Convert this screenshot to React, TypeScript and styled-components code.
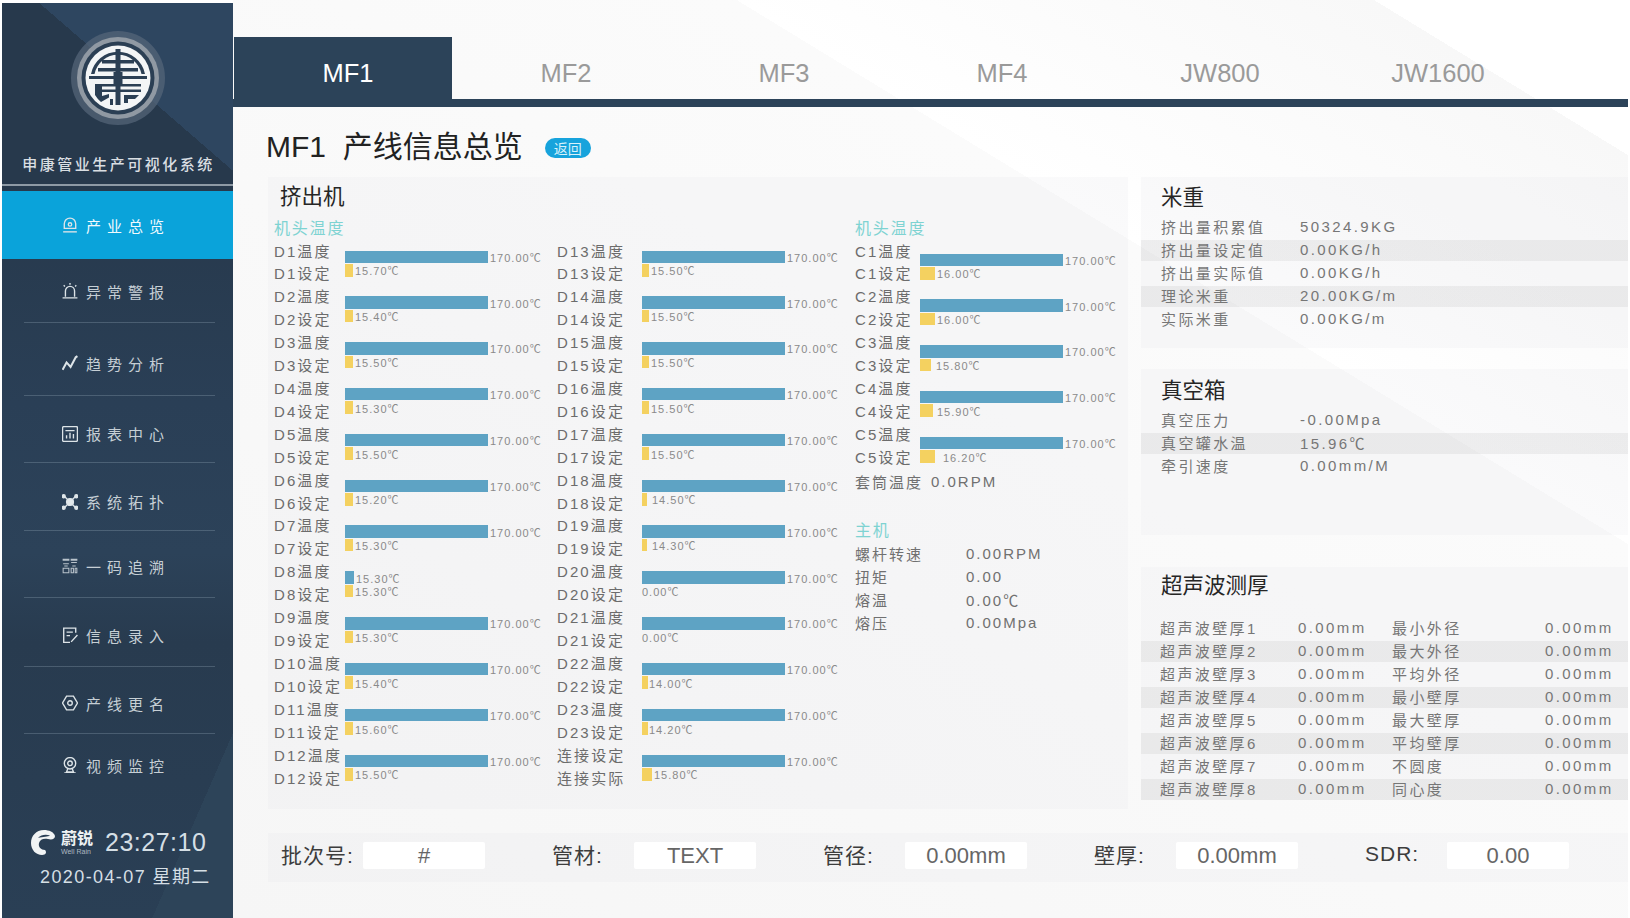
import styled, { createGlobalStyle } from 'styled-components';

const GlobalStyle = createGlobalStyle`
	html, body {
		margin: 0;
		padding: 0;
		background: #fff;
	}
	* {
		box-sizing: border-box;
	}
`;

const Page = styled.div`
	width: 1630px;
	height: 918px;
	display: flex;
	overflow: hidden;
	font-family: "Liberation Sans", "Noto Sans CJK SC", sans-serif;
	background: #fff;
`;

const Sidebar = styled.aside`
	flex: 0 0 231px;
	height: 915px;
	margin: 3px 0 0 2px;
	display: flex;
	flex-direction: column;
	color: #d3dade;
	background:
		linear-gradient(40.9deg, transparent 716px, #2e4660 716px),
		linear-gradient(113.6deg, transparent 504px, #2d4459 504px),
		linear-gradient(180deg, #27394c 0, #27394c 190px, #2a3f56 400px, #2c4259 550px, #283b4f 640px, #2a3f55 915px);
`;

const LogoWrap = styled.div`
	height: 122px;
	padding-top: 28px;
	display: flex;
	justify-content: center;
`;

const SystemName = styled.div`
	margin-top: 30px;
	height: 20px;
	line-height: 20px;
	text-align: center;
	font-size: 15px;
	font-weight: 500;
	letter-spacing: 2.5px;
	padding-left: 2px;
	color: #d9dee2;
	white-space: nowrap;
`;

const SideRule = styled.div`
	margin-top: 9px;
	height: 2px;
	background: #8e9aa5;
	margin-bottom: 5px;
`;

const NavItem = styled.div<{ $h: number; $pad: number; $active?: boolean; $rule?: boolean }>`
	height: ${p => p.$h}px;
	padding: ${p => p.$pad}px 0 0 60px;
	display: flex;
	align-items: center;
	gap: 8px;
	font-size: 15px;
	letter-spacing: 6px;
	color: ${p => (p.$active ? '#f2fafd' : '#c6cfd5')};
	background: ${p =>
		p.$active
			? '#0aa3da'
			: p.$rule
				? 'linear-gradient(rgba(160,180,195,.28), rgba(160,180,195,.28)) no-repeat 22px bottom / 191px 1px'
				: 'none'};
	white-space: nowrap;
`;

const SideFooter = styled.div`
	margin-top: 32px;
	padding-left: 28px;
	display: flex;
	flex-direction: column;
`;

const BrandRow = styled.div`
	display: flex;
	align-items: center;
`;

const BrandText = styled.div`
	margin-left: 4px;
	width: 35px;
	display: flex;
	flex-direction: column;
	color: #eef2f4;
`;

const BrandName = styled.span`
	font-size: 16px;
	line-height: 17px;
	font-weight: 700;
	white-space: nowrap;
`;

const BrandSub = styled.span`
	font-size: 7px;
	line-height: 9px;
	color: #aeb9c1;
	white-space: nowrap;
`;

const Clock = styled.div`
	margin-left: 9px;
	font-size: 25px;
	letter-spacing: 0.5px;
	color: #d5dfe5;
`;

const DateLine = styled.div`
	margin: 9px 0 0 10px;
	font-size: 18px;
	line-height: 22px;
	letter-spacing: 1.4px;
	color: #d5dfe5;
	white-space: nowrap;
`;

const Main = styled.main`
	flex: 1;
	min-width: 0;
	margin-right: 2px;
	padding-top: 37px;
	background: linear-gradient(31.4deg, #f6f6f6 0, #fbfbfb 1046px, #fff 1046px, #f8f8f8 1378px, #fff 1378px, #fff);
`;

const Tabs = styled.nav`
	display: flex;
	height: 70px;
	padding-bottom: 8px;
	background: linear-gradient(#2c4359, #2c4359) no-repeat left bottom / 100% 8px;
`;

const Tab = styled.div<{ $active?: boolean }>`
	flex: 0 0 218px;
	margin-left: ${p => (p.$active ? '1px' : '0')};
	padding: 10px 0 0 10px;
	display: flex;
	align-items: center;
	justify-content: center;
	font-size: 25.5px;
	color: ${p => (p.$active ? '#fff' : '#9a9a9a')};
	background: ${p => (p.$active ? '#2c4359' : 'transparent')};
`;

const Content = styled.div`
	padding: 17px 0 0 35px;
`;

const TitleRow = styled.div`
	height: 40px;
	margin: 0 0 13px -2px;
	display: flex;
	align-items: center;
`;

const PageTitle = styled.h1`
	margin: 0;
	font-size: 30px;
	font-weight: 400;
	color: #222;
	white-space: pre;
`;

const BackBadge = styled.span`
	margin: 8px 0 0 22px;
	width: 46px;
	height: 20px;
	border-radius: 10px;
	display: flex;
	align-items: center;
	justify-content: center;
	font-size: 14px;
	color: #d8f2fb;
	background: #17a3dc;
`;

const Columns = styled.div`
	display: flex;
	gap: 13px;
	align-items: flex-start;
`;

const Panel = styled.section`
	background: rgba(226, 227, 232, 0.17);
`;

const ExtruderPanel = styled(Panel)`
	flex: 0 0 860px;
	height: 632px;
	padding: 7px 0 0 6px;
`;

const PanelTitle = styled.h2<{ $left?: number }>`
	margin: 0 0 0 ${p => p.$left ?? 0}px;
	height: 26px;
	line-height: 26px;
	font-size: 21.5px;
	font-weight: 400;
	color: #262626;
`;

const ExtruderGrid = styled.div`
	margin-top: 9px;
	display: grid;
	grid-template-columns: 283px 298px 1fr;
`;

const SubHead = styled.div<{ $top?: number }>`
	margin-top: ${p => p.$top ?? 0}px;
	height: 21.5px;
	line-height: 20px;
	font-size: 16px;
	letter-spacing: 1.8px;
	color: #7ed3d2;
`;

const Pair = styled.div<{ $label: number }>`
	height: 45.84px;
	display: grid;
	grid-template-columns: ${p => p.$label}px 1fr;
`;

const PairLabels = styled.div`
	display: flex;
	flex-direction: column;
`;

const DataLabel = styled.span`
	height: 22.92px;
	line-height: 22.92px;
	font-size: 15px;
	letter-spacing: 2.1px;
	color: #6c6c6c;
	white-space: nowrap;
`;

const PairBars = styled.div<{ $top: number }>`
	padding-top: ${p => p.$top}px;
	display: flex;
	flex-direction: column;
	gap: 1px;
`;

const BarLine = styled.div`
	height: 12.5px;
	display: flex;
	align-items: center;
`;

const Bar = styled.div<{ $width: number; $kind: 'actual' | 'set' }>`
	flex: 0 0 ${p => p.$width}px;
	height: 100%;
	background: ${p => (p.$kind === 'actual' ? '#5ea3c4' : '#f4d160')};
`;

const BarValue = styled.span<{ $gap: number }>`
	margin-left: ${p => p.$gap}px;
	font-size: 11px;
	letter-spacing: 1px;
	color: #8a8a8a;
	white-space: nowrap;
`;

const InfoLine = styled.div<{ $value: number }>`
	height: 23px;
	display: grid;
	grid-template-columns: ${p => p.$value}px 1fr;
	align-items: center;
	font-size: 15px;
	letter-spacing: 2px;
	color: #707070;
	white-space: nowrap;
`;

const SideColumn = styled.div`
	flex: 1;
	min-width: 0;
	display: flex;
	flex-direction: column;
`;

const MetricPanel = styled(Panel)<{ $h: number; $mb: number; $pad: number }>`
	height: ${p => p.$h}px;
	margin-bottom: ${p => p.$mb}px;
	padding-top: ${p => p.$pad}px;
`;

const MetricList = styled.div<{ $top: number }>`
	margin-top: ${p => p.$top}px;
`;

const MetricRow = styled.div<{ $columns: string; $pad: number }>`
	height: 23px;
	padding: 0 0 3px ${p => p.$pad}px;
	display: grid;
	grid-template-columns: ${p => p.$columns};
	align-items: center;
	font-size: 15px;
	letter-spacing: 2.4px;
	color: #767676;
	white-space: nowrap;

	&:nth-child(even) {
		background: linear-gradient(rgba(0, 0, 0, 0.05), rgba(0, 0, 0, 0.05)) no-repeat center / 100% 21px;
	}
`;

const BottomBar = styled(Panel)`
	margin-top: 24px;
	height: 49px;
	padding: 9px 0 0 13px;
	display: grid;
	grid-template-columns: repeat(5, 271px);
	align-items: start;
`;

const Field = styled.div`
	height: 27px;
	display: flex;
	align-items: center;
`;

const FieldLabel = styled.span`
	flex: 0 0 82px;
	padding-bottom: 4px;
	font-size: 21px;
	letter-spacing: 1px;
	color: #3d3d3d;
	white-space: nowrap;
`;

const FieldValue = styled.span`
	flex: 0 0 122px;
	height: 27px;
	line-height: 27px;
	text-align: center;
	font-size: 22px;
	color: #666;
	background: #fff;
	border-radius: 2px;
`;

const Logo = () => (
	<svg width="94" height="94" viewBox="-47 -47 94 94">
		<circle r="47" fill="#57677a" opacity=".7" />
		<circle r="41" fill="#9099a3" />
		<circle r="36.500" fill="#2b3f54" />
		<circle r="32.500" fill="#f3f5f6" />
		<path d="M-27-4A27.500 27.500 0 0 1 27-4H23.500A24 24 0 0 0-23.500-4Z" fill="#2b3f54" />
		<path d="M-29-2H29V1H-29Z" fill="#2b3f54" />
		<path d="M-2.500-29H2.500V-6H4.500V6H2.500V27H-2.500V6H-4.500V-6H-2.500Z" fill="#2b3f54" />
		<path d="M-16-18H16V-14.500H-16ZM-20-10H20V-6.500H-20Z" fill="#2b3f54" />
		<path d="M-23 6H23V8.500H-16V11.500H23V14H-16V18L-9 16V19.500L-17 24A28 28 0 0 1-23 17Z" fill="#2b3f54" />
		<path d="M6 17H21L17 21H10V25H6ZM-8 21H-5V27H-8Z" fill="#2b3f54" />
	</svg>
);

const BrandMark = () => (
	<svg width="27" height="27" viewBox="0 0 27 27">
		<path
			d="M14 1C6 1 1 7 1 14c0 7 5 12 11 12 4 0 5-3 3-5-4 0-7-3-6-7 1-4 5-5 9-4 4 1 7 0 7-3-1-4-6-6-11-6Z"
			fill="#f1f4f5"
		/>
		<path d="M8 9c3-3.500 8-4 12-2.500-2 1.500-7 1-12 2.500Z" fill="#2a3f55" />
	</svg>
);

const iconPaths: Record<string, React.ReactNode> = {
	overview: (
		<>
			<path d="M3 11V7a5 5 0 0 1 10 0v4Z" />
			<circle cx="8" cy="7.500" r="1.500" />
			<path d="M2 14h12" />
		</>
	),
	alarm: (
		<>
			<path d="M4 13V8a4 4 0 0 1 8 0v5" />
			<path d="M1.500 14h13M8 1v1.500M2.500 3l1 1M13.500 3l-1 1" />
		</>
	),
	trend: <path d="M1.500 14 5 7.500l3.500 4L13 3l1.500-1" strokeWidth="1.800" />,
	report: (
		<>
			<rect x="1.500" y="1.500" width="13" height="13" rx="1" />
			<path d="M4 5h8M5 12V9M8 12V7M11 12V8" />
		</>
	),
	topology: (
		<>
			<path d="M3 3l10 10M13 3 3 13" />
			<circle cx="8" cy="8" r="3" fill="#e2e8eb" />
			<circle cx="2.500" cy="3" r="1.300" fill="#e2e8eb" />
			<circle cx="13.500" cy="3" r="1.300" fill="#e2e8eb" />
			<circle cx="2.500" cy="13" r="1.300" fill="#e2e8eb" />
			<circle cx="13.500" cy="13" r="1.300" fill="#e2e8eb" />
		</>
	),
	code: (
		<path
			d="M2 2h5v1H2ZM9 2h5v1H9ZM2 6h5M9 5h5M3 8h3M10 8h3M2 10h5v4H2ZM9 10h2v4H9ZM12.500 10h1.500v4h-1.500Z"
			strokeWidth=".9"
			opacity=".8"
		/>
	),
	entry: (
		<>
			<path d="M13 6V2H2.500v12.500H8" />
			<path d="M5 5.500h5.500M5 8.500h3M9 14l5.500-6" />
		</>
	),
	rename: (
		<>
			<path d="M5 2h6l3.500 6L11 14H5L1.500 8Z" />
			<circle cx="8" cy="8" r="2" />
		</>
	),
	video: (
		<>
			<circle cx="8" cy="6.500" r="5" />
			<circle cx="8" cy="6.500" r="2" />
			<path d="M6 11.500 5 14h6l-1-2.500M3 15h10" />
		</>
	),
};

const NavIcon = ({ name }: { name: string }) => (
	<svg width="16" height="16" viewBox="1 1 14 14" fill="none" stroke="#dde4e8" strokeWidth="1.200" style={{ flex: '0 0 16px' }}>
		{iconPaths[name]}
	</svg>
);

const navItems = [
	{ label: '产业总览', icon: 'overview', h: 68, pad: 0, active: true },
	{ label: '异常警报', icon: 'alarm', h: 64, pad: 0, rule: true },
	{ label: '趋势分析', icon: 'trend', h: 73, pad: 7, rule: true },
	{ label: '报表中心', icon: 'report', h: 67, pad: 8, rule: true },
	{ label: '系统拓扑', icon: 'topology', h: 68, pad: 9, rule: true },
	{ label: '一码追溯', icon: 'code', h: 67, pad: 3, rule: true },
	{ label: '信息录入', icon: 'entry', h: 69, pad: 5, rule: true },
	{ label: '产线更名', icon: 'rename', h: 67, pad: 5, rule: true },
	{ label: '视频监控', icon: 'video', h: 62, pad: 0 },
];

const tabs = ['MF1', 'MF2', 'MF3', 'MF4', 'JW800', 'JW1600'];

type PairData = {
	top: string;
	bottom: string;
	actual?: string;
	actualWidth?: number;
	set: string;
	setWidth: number;
	setGap: number;
};

const column1: PairData[] = [
	['1', '15.70'], ['2', '15.40'], ['3', '15.50'], ['4', '15.30'], ['5', '15.50'], ['6', '15.20'],
	['7', '15.30'], ['8', '15.30'], ['9', '15.30'], ['10', '15.40'], ['11', '15.60'], ['12', '15.50'],
].map(([n, set]) => ({
	top: `D${n}温度`,
	bottom: `D${n}设定`,
	set,
	setWidth: 8,
	setGap: 2,
	...(n === '8' ? { actual: '15.30', actualWidth: 9 } : {}),
}));

const column2: PairData[] = [
	{ top: 'D13温度', bottom: 'D13设定', set: '15.50', setWidth: 7, setGap: 2 },
	{ top: 'D14温度', bottom: 'D14设定', set: '15.50', setWidth: 7, setGap: 2 },
	{ top: 'D15温度', bottom: 'D15设定', set: '15.50', setWidth: 7, setGap: 2 },
	{ top: 'D16温度', bottom: 'D16设定', set: '15.50', setWidth: 7, setGap: 2 },
	{ top: 'D17温度', bottom: 'D17设定', set: '15.50', setWidth: 7, setGap: 2 },
	{ top: 'D18温度', bottom: 'D18设定', set: '14.50', setWidth: 5, setGap: 5 },
	{ top: 'D19温度', bottom: 'D19设定', set: '14.30', setWidth: 5, setGap: 5 },
	{ top: 'D20温度', bottom: 'D20设定', set: '0.00', setWidth: 0, setGap: 0 },
	{ top: 'D21温度', bottom: 'D21设定', set: '0.00', setWidth: 0, setGap: 0 },
	{ top: 'D22温度', bottom: 'D22设定', set: '14.00', setWidth: 6, setGap: 1 },
	{ top: 'D23温度', bottom: 'D23设定', set: '14.20', setWidth: 6, setGap: 1 },
	{ top: '连接设定', bottom: '连接实际', set: '15.80', setWidth: 10, setGap: 2 },
];

const column3: PairData[] = [
	{ top: 'C1温度', bottom: 'C1设定', set: '16.00', setWidth: 15, setGap: 2 },
	{ top: 'C2温度', bottom: 'C2设定', set: '16.00', setWidth: 15, setGap: 2 },
	{ top: 'C3温度', bottom: 'C3设定', set: '15.80', setWidth: 11, setGap: 5 },
	{ top: 'C4温度', bottom: 'C4设定', set: '15.90', setWidth: 13, setGap: 4 },
	{ top: 'C5温度', bottom: 'C5设定', set: '16.20', setWidth: 15, setGap: 8 },
];

const hostRows = [
	['螺杆转速', '0.00RPM'],
	['扭矩', '0.00'],
	['熔温', '0.00℃'],
	['熔压', '0.00Mpa'],
];

const weightRows = [
	['挤出量积累值', '50324.9KG'],
	['挤出量设定值', '0.00KG/h'],
	['挤出量实际值', '0.00KG/h'],
	['理论米重', '20.00KG/m'],
	['实际米重', '0.00KG/m'],
];

const vacuumRows = [
	['真空压力', '-0.00Mpa'],
	['真空罐水温', '15.96℃'],
	['牵引速度', '0.00mm/M'],
];

const sideNames = ['最小外径', '最大外径', '平均外径', '最小壁厚', '最大壁厚', '平均壁厚', '不圆度', '同心度'];

const fields = [
	['批次号:', '#'],
	['管材:', 'TEXT'],
	['管径:', '0.00mm'],
	['壁厚:', '0.00mm'],
	['SDR:', '0.00'],
];

const BarPair = ({ data, label, top }: { data: PairData; label: number; top: number }) => (
	<Pair $label={label}>
		<PairLabels>
			<DataLabel>{data.top}</DataLabel>
			<DataLabel>{data.bottom}</DataLabel>
		</PairLabels>
		<PairBars $top={top}>
			<BarLine>
				<Bar $kind="actual" $width={data.actualWidth ?? 143} />
				<BarValue $gap={2}>{data.actual ?? '170.00'}℃</BarValue>
			</BarLine>
			<BarLine>
				<Bar $kind="set" $width={data.setWidth} />
				<BarValue $gap={data.setGap}>{data.set}℃</BarValue>
			</BarLine>
		</PairBars>
	</Pair>
);

const App = () => {
	return (
		<>
			<GlobalStyle />
			<Page>
				<Sidebar>
					<LogoWrap>
						<Logo />
					</LogoWrap>
					<SystemName>申康管业生产可视化系统</SystemName>
					<SideRule />
					{navItems.map(item => (
						<NavItem key={item.label} $h={item.h} $pad={item.pad} $active={item.active} $rule={item.rule}>
							<NavIcon name={item.icon} />
							{item.label}
						</NavItem>
					))}
					<SideFooter>
						<BrandRow>
							<BrandMark />
							<BrandText>
								<BrandName>蔚锐</BrandName>
								<BrandSub>Well Rain</BrandSub>
							</BrandText>
							<Clock>23:27:10</Clock>
						</BrandRow>
						<DateLine>2020-04-07 星期二</DateLine>
					</SideFooter>
				</Sidebar>
				<Main>
					<Tabs>
						{tabs.map((tab, i) => (
							<Tab key={tab} $active={i === 0}>{tab}</Tab>
						))}
					</Tabs>
					<Content>
						<TitleRow>
							<PageTitle>MF1  产线信息总览</PageTitle>
							<BackBadge>返回</BackBadge>
						</TitleRow>
						<Columns>
							<ExtruderPanel>
								<PanelTitle $left={6}>挤出机</PanelTitle>
								<ExtruderGrid>
									<div>
										<SubHead>机头温度</SubHead>
										{column1.map(d => <BarPair key={d.top} data={d} label={71} top={10} />)}
									</div>
									<div>
										<SubHead>&nbsp;</SubHead>
										{column2.map(d => <BarPair key={d.top} data={d} label={85} top={10} />)}
									</div>
									<div>
										<SubHead>机头温度</SubHead>
										{column3.map(d => <BarPair key={d.top} data={d} label={65} top={13} />)}
										<InfoLine $value={76}>
											<span>套筒温度</span>
											<span>0.0RPM</span>
										</InfoLine>
										<SubHead $top={28}>主机</SubHead>
										{hostRows.map(([name, value]) => (
											<InfoLine key={name} $value={111}>
												<span>{name}</span>
												<span>{value}</span>
											</InfoLine>
										))}
									</div>
								</ExtruderGrid>
							</ExtruderPanel>
							<SideColumn>
								<MetricPanel $h={171} $mb={21} $pad={8}>
									<PanelTitle $left={20}>米重</PanelTitle>
									<MetricList $top={4.500}>
										{weightRows.map(([name, value]) => (
											<MetricRow key={name} $columns="139px 1fr" $pad={20}>
												<span>{name}</span>
												<span>{value}</span>
											</MetricRow>
										))}
									</MetricList>
								</MetricPanel>
								<MetricPanel $h={166} $mb={32} $pad={9}>
									<PanelTitle $left={20}>真空箱</PanelTitle>
									<MetricList $top={4.500}>
										{vacuumRows.map(([name, value]) => (
											<MetricRow key={name} $columns="139px 1fr" $pad={20}>
												<span>{name}</span>
												<span>{value}</span>
											</MetricRow>
										))}
									</MetricList>
								</MetricPanel>
								<MetricPanel $h={233} $mb={0} $pad={6}>
									<PanelTitle $left={20}>超声波测厚</PanelTitle>
									<MetricList $top={17.500}>
										{sideNames.map((name, i) => (
											<MetricRow key={name} $columns="138px 94px 153px 1fr" $pad={19}>
												<span>超声波壁厚{i + 1}</span>
												<span>0.00mm</span>
												<span>{name}</span>
												<span>0.00mm</span>
											</MetricRow>
										))}
									</MetricList>
								</MetricPanel>
							</SideColumn>
						</Columns>
						<BottomBar>
							{fields.map(([name, value]) => (
								<Field key={name}>
									<FieldLabel>{name}</FieldLabel>
									<FieldValue>{value}</FieldValue>
								</Field>
							))}
						</BottomBar>
					</Content>
				</Main>
			</Page>
		</>
	);
};

export default App;
